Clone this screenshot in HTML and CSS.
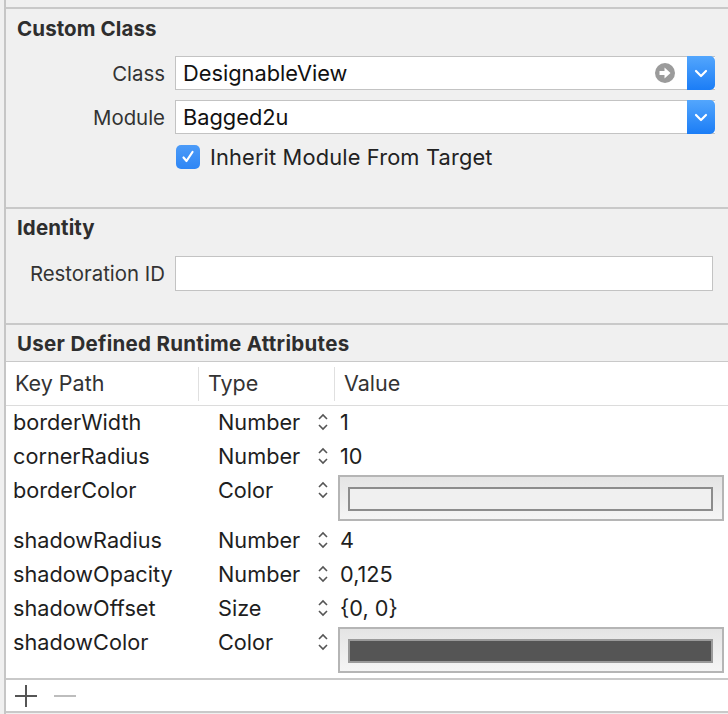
FILE: index.html
```html
<!DOCTYPE html>
<html>
<head>
<meta charset="utf-8">
<link rel="stylesheet" href="styles.css">
</head>
<body>
<div class="panel">
  <div class="topgap"></div>
  <section class="sec sec-custom">
    <h2 class="sec-title">Custom Class</h2>
    <div class="form-row">
      <span class="lbl">Class</span>
      <div class="combo">
        <span class="combo-val">DesignableView</span>
        <span class="goto"><svg width="20" height="20" viewBox="0 0 20 20"><circle cx="10" cy="10" r="10" fill="#9b9b9b"/><path d="M4.5 8h5V4.5L15.5 10 9.5 15.5V12h-5z" fill="#fff"/></svg></span>
        <span class="drop"><svg width="14" height="9" viewBox="0 0 14 9"><path d="M2 2l5 5 5-5" fill="none" stroke="#fff" stroke-width="2.2" stroke-linecap="round" stroke-linejoin="round"/></svg></span>
      </div>
    </div>
    <div class="form-row">
      <span class="lbl">Module</span>
      <div class="combo">
        <span class="combo-val">Bagged2u</span>
        <span class="drop"><svg width="14" height="9" viewBox="0 0 14 9"><path d="M2 2l5 5 5-5" fill="none" stroke="#fff" stroke-width="2.2" stroke-linecap="round" stroke-linejoin="round"/></svg></span>
      </div>
    </div>
    <div class="form-row check-row">
      <span class="lbl"></span>
      <div class="check-wrap">
        <span class="checkbox"><svg width="16" height="16" viewBox="0 0 16 16"><path d="M3.5 8.5l3 3.5 6-9" fill="none" stroke="#fff" stroke-width="2.2" stroke-linecap="round" stroke-linejoin="round"/></svg></span>
        <span class="check-text">Inherit Module From Target</span>
      </div>
    </div>
  </section>
  <section class="sec sec-identity">
    <h2 class="sec-title">Identity</h2>
    <div class="form-row">
      <span class="lbl">Restoration ID</span>
      <div class="textfield"></div>
    </div>
  </section>
  <section class="sec sec-attrs">
    <h2 class="sec-title sec-title-wide">User Defined Runtime Attributes</h2>
  </section>
  <div class="table">
    <div class="thead">
      <span class="th th-key">Key Path</span>
      <span class="th th-type">Type</span>
      <span class="th th-val">Value</span>
    </div>
    <div class="tbody">
      <div class="tr"><span class="td-key">borderWidth</span><span class="td-type">Number</span><span class="stepper"><svg width="12" height="20" viewBox="0 0 12 20"><path d="M2 7l4-4 4 4M2 13l4 4 4-4" fill="none" stroke="#555" stroke-width="1.6"/></svg></span><span class="td-val">1</span></div>
      <div class="tr"><span class="td-key">cornerRadius</span><span class="td-type">Number</span><span class="stepper"><svg width="12" height="20" viewBox="0 0 12 20"><path d="M2 7l4-4 4 4M2 13l4 4 4-4" fill="none" stroke="#555" stroke-width="1.6"/></svg></span><span class="td-val">10</span></div>
      <div class="tr tr-color"><span class="td-key">borderColor</span><span class="td-type">Color</span><span class="stepper"><svg width="12" height="20" viewBox="0 0 12 20"><path d="M2 7l4-4 4 4M2 13l4 4 4-4" fill="none" stroke="#555" stroke-width="1.6"/></svg></span><div class="well"><div class="swatch swatch-light"></div></div></div>
      <div class="tr"><span class="td-key">shadowRadius</span><span class="td-type">Number</span><span class="stepper"><svg width="12" height="20" viewBox="0 0 12 20"><path d="M2 7l4-4 4 4M2 13l4 4 4-4" fill="none" stroke="#555" stroke-width="1.6"/></svg></span><span class="td-val">4</span></div>
      <div class="tr"><span class="td-key">shadowOpacity</span><span class="td-type">Number</span><span class="stepper"><svg width="12" height="20" viewBox="0 0 12 20"><path d="M2 7l4-4 4 4M2 13l4 4 4-4" fill="none" stroke="#555" stroke-width="1.6"/></svg></span><span class="td-val">0,125</span></div>
      <div class="tr"><span class="td-key">shadowOffset</span><span class="td-type">Size</span><span class="stepper"><svg width="12" height="20" viewBox="0 0 12 20"><path d="M2 7l4-4 4 4M2 13l4 4 4-4" fill="none" stroke="#555" stroke-width="1.6"/></svg></span><span class="td-val">{0, 0}</span></div>
      <div class="tr tr-color"><span class="td-key">shadowColor</span><span class="td-type">Color</span><span class="stepper"><svg width="12" height="20" viewBox="0 0 12 20"><path d="M2 7l4-4 4 4M2 13l4 4 4-4" fill="none" stroke="#555" stroke-width="1.6"/></svg></span><div class="well"><div class="swatch swatch-dark"></div></div></div>
    </div>
    <div class="tfoot">
      <span class="btn-plus"><svg width="24" height="24" viewBox="0 0 24 24"><path d="M12 1v22M1 12h22" stroke="#555" stroke-width="2"/></svg></span>
      <span class="btn-minus"><svg width="24" height="24" viewBox="0 0 24 24"><path d="M1 12h22" stroke="#bdbdbd" stroke-width="2"/></svg></span>
    </div>
  </div>
</div>
</body>
</html>
```

FILE: styles.css
```css
* { box-sizing: border-box; }
html, body { margin: 0; padding: 0; }
body {
  background: #f0f0f0;
  font-family: Inter, "Noto Sans", "Liberation Sans", sans-serif;
  color: #2a2a2a;
  width: 728px;
  height: 714px;
  overflow: hidden;
}
.panel {
  margin-left: 4px;
  border-left: 2px solid #c6c6c6;
  height: 714px;
  background: #f0f0f0;
}
.topgap { height: 7px; }
.sec {
  border-top: 2px solid #c9c9c9;
}
.sec-title {
  margin: 0;
  font-size: 20.5px;
  font-weight: 700;
  line-height: 22px;
  color: #2e2e2e;
  padding-left: 11px;
  letter-spacing: 0.1px;
}
.sec-title-wide { letter-spacing: 0.3px; }
.sec-custom { height: 200px; padding-top: 9px; }
.sec-identity { height: 116px; padding-top: 8px; }
.sec-attrs { height: 38px; padding-top: 8px; }

.form-row {
  display: grid;
  grid-template-columns: 159px 1fr;
  column-gap: 10px;
  align-items: center;
  padding-right: 13px;
}
.sec-custom .form-row:nth-of-type(1) { margin-top: 16px; }
.sec-custom .form-row + .form-row { margin-top: 10px; }
.sec-custom .check-row { margin-top: 13px; }
.sec-identity .form-row { margin-top: 17px; }
.lbl {
  text-align: right;
  font-size: 20.4px;
  color: #333;
}
.combo {
  height: 34px;
  background: #fff;
  border: 1px solid #c3c3c3;
  border-right: none;
  display: flex;
  align-items: center;
  position: relative;
}
.combo-val {
  flex: 1;
  padding-left: 7px;
  font-size: 21.8px;
  color: #111;
}
.goto { display: flex; margin-right: 12px; }
.drop {
  width: 28px;
  margin-top: -1px;
  margin-bottom: -1px;
  background: linear-gradient(#53a6fd, #1b7df6);
  border-radius: 0 5px 5px 0;
  display: flex;
  align-items: center;
  justify-content: center;
  align-self: stretch;
}
.check-wrap { display: flex; align-items: center; gap: 10px; margin-left: 1px; }
.checkbox {
  width: 24px;
  height: 24px;
  border-radius: 5px;
  background: linear-gradient(#4c9bf8, #2e86f5);
  display: flex;
  align-items: center;
  justify-content: center;
}
.check-text { font-size: 21.8px; color: #222; letter-spacing: 0.15px; }
.textfield {
  height: 35px;
  background: #fff;
  border: 1px solid #c3c3c3;
  margin-right: 2px;
}

.table {
  background: #fff;
  border-top: 1px solid #c9c9c9;
  border-bottom: 2px solid #c9c9c9;
}
.thead {
  height: 44px;
  display: flex;
  align-items: center;
  border-bottom: 1px solid #dcdcdc;
  font-size: 21.5px;
  color: #333;
}
.th { height: 34px; display: flex; align-items: center; padding-bottom: 2px; }
.th-key { width: 192px; padding-left: 9px; }
.th-type { width: 136px; padding-left: 9px; border-left: 1px solid #e0e0e0; }
.th-val { padding-left: 9px; border-left: 1px solid #e0e0e0; }
.tbody { padding-bottom: 2px; border-bottom: 2px solid #c9c9c9; }
.tr {
  display: flex;
  align-items: flex-start;
  height: 34px;
  font-size: 21.7px;
  color: #1e1e1e;
}
.tr > span { line-height: 32px; }
.td-key { width: 212px; padding-left: 7px; }
.td-type { width: 101px; }
.stepper { width: 23px; display: flex; align-items: center; height: 32px; margin-left: -2px; }
.tr-color { height: 50px; }
.well {
  margin-top: 1px;
  width: 386px;
  height: 46px;
  border: 2px solid #b5b5b5;
  background: linear-gradient(#e4e4e4, #f5f5f5);
  padding: 10px 9px 8px 8px;
  margin-left: -2px;
}
.swatch { height: 24px; border: 2px solid #8c8c8c; }
.swatch-light { background: #f0f0f0; }
.swatch-dark { background: #555; border-color: #9a9a9a; }
.tfoot {
  height: 31px;
  display: flex;
  align-items: center;
  gap: 15px;
  padding-left: 8px;
}
.btn-plus, .btn-minus { display: flex; }
```
